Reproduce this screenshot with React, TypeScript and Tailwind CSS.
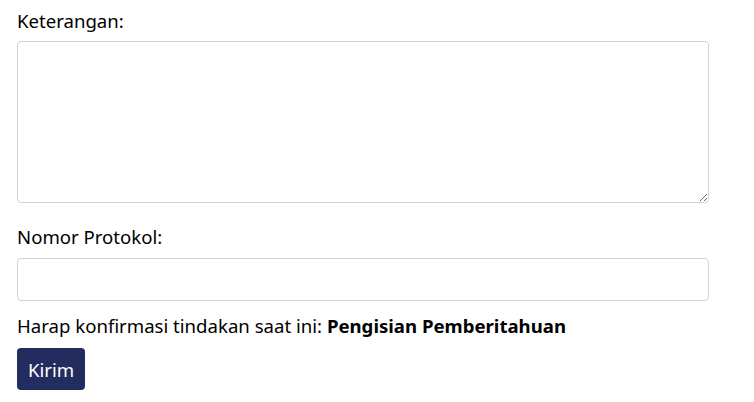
import React from 'react';

export default function App() {
    return (
        <div className="bg-white min-h-screen pl-[17px] pt-[7px] text-[18.6px] text-black" style={{ fontFamily: '"Noto Sans", "Open Sans", sans-serif' }}>
            <form className="w-[692px] flex flex-col" onSubmit={(e) => e.preventDefault()}>
                <label className="leading-[27px] mb-[7px]" htmlFor="keterangan">Keterangan:</label>
                <textarea id="keterangan" className="h-[162px] w-full border border-[#ced4da] rounded-[4px] px-3 py-2 resize-y" />
                <label className="leading-[27px] mt-[20px] mb-[8px]" htmlFor="protokol">Nomor Protokol:</label>
                <input id="protokol" type="text" className="h-[43px] w-full border border-[#ced4da] rounded-[4px] px-3" />
                <p className="leading-[27px] mt-[11px]">
                    Harap konfirmasi tindakan saat ini: <strong className="font-bold">Pengisian Pemberitahuan</strong>
                </p>
                <div className="mt-[9px]">
                    <button type="submit" className="bg-[#232c5e] text-white rounded-[4px] h-[42px] px-[11px] leading-[27px]">Kirim</button>
                </div>
            </form>
        </div>
    );
}
